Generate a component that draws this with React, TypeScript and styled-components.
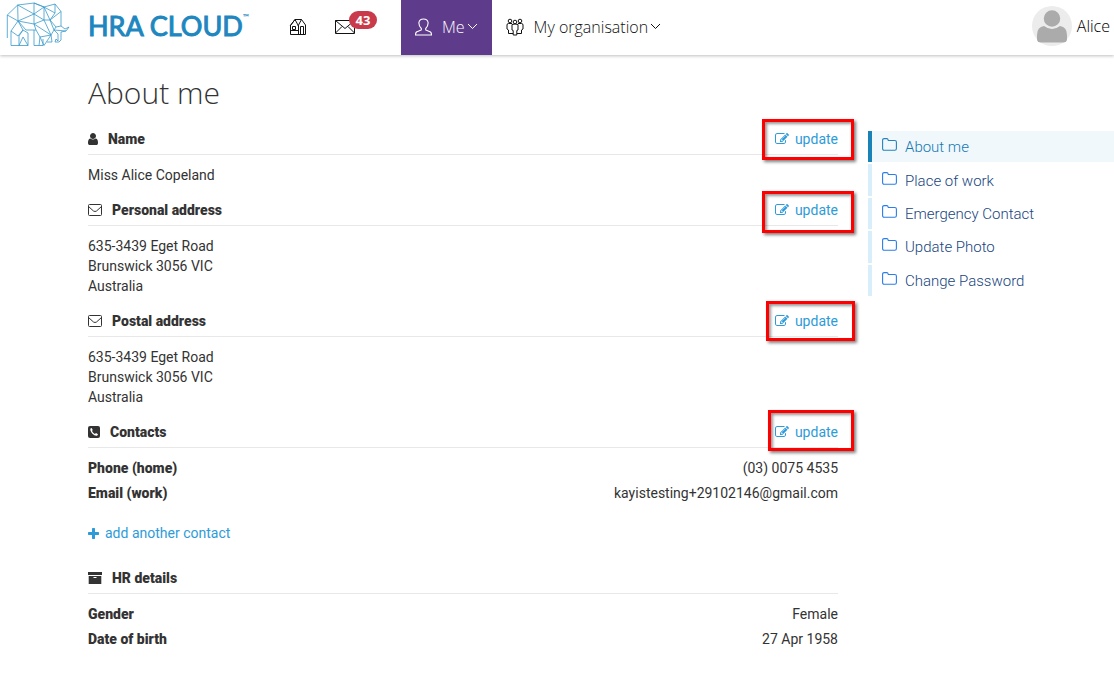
import React from "react";
import styled, { createGlobalStyle } from "styled-components";

const Global = createGlobalStyle`
  * { box-sizing: border-box; }
  body { margin: 0; background: #fff; color: #333; font: 14px/20px Roboto, sans-serif; }
  h1, h2, p, ul, dl, dd { margin: 0; padding: 0; }
  ul { list-style: none; }
  a { text-decoration: none; }
  svg { display: block; flex: none; }
`;

const Header = styled.header`
  display: flex;
  align-items: center;
  height: 55px;
  padding: 0 4px 0 6px;
  background: #fff;
  box-shadow: 0 1px 3px rgba(0, 0, 0, 0.25);
  font: 300 16px/24px "Open Sans", sans-serif;
`;

const Brand = styled.a`
  display: flex;
  align-items: center;
  gap: 18px;
  width: 283px;
  padding-bottom: 4px;
  color: #1e87c0;
`;

const Wordmark = styled.span`
  display: flex;
  font: 400 27px/32px Lato, sans-serif;
  -webkit-text-stroke: 1px currentColor;
  white-space: nowrap;
`;

const Mark = styled.sup`
  font: 700 8px/14px Lato, sans-serif;
  -webkit-text-stroke: 0;
`;

const Nav = styled.nav`
  display: flex;
  align-items: center;
  align-self: stretch;
  flex: 1;
`;

const IconLink = styled.a`
  position: relative;
  width: 46px;
  padding-bottom: 2px;
  color: #111;
`;

const Badge = styled.span`
  position: absolute;
  left: 14px;
  top: -9px;
  width: 28px;
  border-radius: 9px;
  background: #c93a4a;
  color: #fff;
  font: 700 13px/18px "Open Sans", sans-serif;
  text-align: center;
`;

const MenuButton = styled.button<{ $active?: boolean }>`
  display: flex;
  align-items: center;
  align-self: stretch;
  gap: 2px;
  margin-left: ${(p) => (p.$active ? "20px" : "0")};
  padding: 0 14px 2px;
  border: 0;
  background: ${(p) => (p.$active ? "#5e3c8b" : "transparent")};
  color: ${(p) => (p.$active ? "#fff" : "#111")};
  font: inherit;
`;

const MenuLabel = styled.span`
  margin-left: 8px;
`;

const Account = styled.a`
  display: flex;
  align-items: center;
  gap: 5px;
  padding-bottom: 4px;
  color: #000;
`;

const Layout = styled.div`
  display: grid;
  grid-template-columns: 125fr 41fr;
  column-gap: 30px;
  padding: 18px 0 24px 88px;
`;

const Title = styled.h1`
  margin-bottom: 16px;
  font: 300 30px/40px "Open Sans", sans-serif;
`;

const Section = styled.section`
  margin-bottom: 15px;
`;

const SectionHead = styled.div`
  display: flex;
  justify-content: space-between;
  margin-bottom: 10px;
  padding-bottom: 5px;
  border-bottom: 1px solid #e8e8e8;
`;

const SectionTitle = styled.h2`
  display: flex;
  align-items: center;
  gap: 10px;
  font: 900 14px/20px Roboto, sans-serif;
`;

const ActionLink = styled.a`
  position: relative;
  display: inline-flex;
  align-items: center;
  gap: 6px;
  color: #2e9bd9;
`;

const Highlight = styled.span<{ $inset: string }>`
  position: absolute;
  inset: ${(p) => p.$inset};
  border: 3px solid #fe0000;
  box-shadow: 2px 2px 3px rgba(0, 0, 0, 0.5), inset 2px 2px 3px rgba(0, 0, 0, 0.4);
`;

const Details = styled.dl`
  display: grid;
  gap: 5px;
`;

const Detail = styled.div`
  display: flex;
  justify-content: space-between;
`;

const Term = styled.dt`
  font-weight: 900;
`;

const AddRow = styled.p`
  display: flex;
  margin: 20px 0 25px;
`;

const SideList = styled.ul`
  display: grid;
  grid-auto-rows: 1fr;
  gap: 2px;
  min-height: 165px;
  margin-top: 58px;
`;

const SideLink = styled.a<{ $active?: boolean }>`
  display: flex;
  align-items: center;
  gap: 8px;
  height: 100%;
  padding: 1px 0 0 10px;
  border-left: 4px solid ${(p) => (p.$active ? "#1b82b8" : "#d8eefa")};
  background: ${(p) => (p.$active ? "#f0f8fc" : "transparent")};
  color: ${(p) => (p.$active ? "#1478b3" : "#174580")};
  font-size: 15px;
  font-weight: 300;

  svg {
    margin-bottom: 5px;
    color: ${(p) => (p.$active ? "#2583ba" : "#2b7de9")};
  }
`;

const Elephant = () => (
  <svg width="64" height="47" viewBox="0 0 64 47" fill="none" stroke="#3a9bcb" strokeWidth="0.8">
    <path d="M1.300 36V13L11.700 3L28 1L38 5L49 2L55 9.500V24L59 27L63 25L60 29L55 30V38L53 40H49L50 37L52 39V32L48 28L50 25L55 24M38 5L28 12L11.700 3L12 19L1.300 13M12 19L5 29V43.500H13V34L17 28L22 31V43.500H13L17 35L22 43.500M12 19L28 12V1M12 19L28 22L28 12L38 18L28 22L30 28H20L12 19M38 5L28 1M38 5L44 18L55 9.500M38 5L49 11L49 2M49 11L44 18L38 18L38 5M30 28L34 35L33 43.500H28V28M28 22L45 33L38 43.500L34 35L45 33L38 18M33 43.500H37V37M45 33L48 28L44 18L50 25M45 33L46 40H41M5 29L12 34L17 28L12 19M48 28L60 29" />
  </svg>
);

const House = () => (
  <svg width="18" height="18" viewBox="0 0 18 18" fill="none" stroke="currentColor">
    <path d="M1.500 16.500V7.500L6 1.500H12.500L16.500 7V16.500ZM1 8L6 1.500L9.500 8V16M9 8L12.500 1.500M11.500 16V8.500H14.500V16M3.500 8.500H6.500V11.500H3.500ZM2 12.500H9" />
  </svg>
);

const Letter = () => (
  <svg width="20" height="14" viewBox="0 0 20 14" fill="none" stroke="currentColor">
    <path d="M.5 .5H19.500V13.500H.5ZM.5 .5L10 8.500L19.500 .5M.5 13L7 6.500M19.500 13L13 6.500" />
  </svg>
);

const Person = () => (
  <svg width="17" height="18" viewBox="0 0 17 18" fill="none" stroke="currentColor" strokeWidth="1.100">
    <path d="M6.300 10.500Q3.700 8 3.900 4.500Q4.500 1 8.500 1Q12.500 1 13.100 4.500Q13.300 8 10.700 10.500V12L15.500 14Q16.500 15 16.500 17H.5Q.5 15 1.500 14L6.300 12Z" />
  </svg>
);

const People = () => (
  <svg width="18" height="18" viewBox="0 0 18 18" fill="none" stroke="currentColor" strokeWidth="1">
    <circle cx="4" cy="3" r="1.800" />
    <circle cx="9" cy="4" r="1.800" />
    <circle cx="14" cy="3" r="1.800" />
    <path d="M6 6.500Q9 5.500 12 6.500V12L10.800 12.500V17H7.200V12.500L6 12ZM6 5.500H2.500Q1 5.500 1 7V11L2.500 12V15.500H7M12 5.500H15.500Q17 5.500 17 7V11L15.500 12V15.500H11" />
  </svg>
);

const Chevron = () => (
  <svg width="11" height="7" viewBox="0 0 11 7" fill="none" stroke="currentColor">
    <path d="M1 1L5.500 5.500L10 1" />
  </svg>
);

const Avatar = () => (
  <svg width="40" height="40" viewBox="0 0 40 40">
    <circle cx="20" cy="20" r="20" fill="#ececec" />
    <path fill="#ababab" d="M12 20Q20 26 28 20Q35 21 35 29V33Q35 36.500 31 36.500H9Q5 36.500 5 33V29Q5 21 12 20Z" />
    <circle cx="20" cy="12.500" r="9" fill="#ababab" stroke="#ececec" strokeWidth="1.500" />
  </svg>
);

const UserGlyph = () => (
  <svg width="10" height="12" viewBox="256 128 1280 1536" fill="currentColor">
    <path d="M1536 1399q0 109-62.500 187t-150.500 78h-854q-88 0-150.500-78t-62.500-187q0-85 8.500-160.500t31.500-152 58.500-131 94-89 134.500-34.500q131 128 313 128t313-128q76 0 134.500 34.500t94 89 58.500 131 31.500 152 8.500 160.500zm-256-887q0 159-112.500 271.500t-271.500 112.500-271.500-112.500-112.500-271.500 112.500-271.500 271.500-112.500 271.500 112.500 112.500 271.500z" />
  </svg>
);

const EnvelopeGlyph = () => (
  <svg width="14" height="12" viewBox="0 0 14 12" fill="none" stroke="currentColor">
    <rect x=".5" y=".5" width="13" height="11" rx="1" />
    <path d="M.5 2.500L5.500 7Q7 8 8.500 7L13.500 2.500" />
  </svg>
);

const PhoneGlyph = () => (
  <svg width="12" height="12" viewBox="0 0 12 12">
    <rect width="12" height="12" rx="2" fill="currentColor" />
    <path fill="#fff" d="M3.700 2L2.500 2.600Q1.700 4.500 4.200 7.400Q7 10.300 9.300 9.500L10 8.200L8 7.100L6.900 8Q5 7 4 5L4.700 4Z" />
  </svg>
);

const ArchiveGlyph = () => (
  <svg width="14" height="12" viewBox="0 0 14 12">
    <path fill="currentColor" d="M0 0H14V3H0ZM.7 4H13.300V12H.7Z" />
    <path stroke="#fff" d="M5.500 5.500H8.500" />
  </svg>
);

const PlusGlyph = () => (
  <svg width="11" height="11" viewBox="192 128 1408 1408" fill="currentColor">
    <path d="M1600 736v192q0 40-28 68t-68 28h-416v416q0 40-28 68t-68 28h-192q-40 0-68-28t-28-68v-416h-416q-40 0-68-28t-28-68v-192q0-40 28-68t68-28h416v-416q0-40 28-68t68-28h192q40 0 68 28t28 68v416h416q40 0 68 28t28 68z" />
  </svg>
);

const EditGlyph = () => (
  <svg width="14" height="14" viewBox="0 0 1792 1792" fill="currentColor">
    <path d="M888 1184l116-116-152-152-116 116v56h96v96h56zm440-720q-16-16-33 1l-350 350q-17 17-1 33t33-1l350-350q17-17 1-33zm80 594v190q0 119-84.500 203.500t-203.500 84.500h-832q-119 0-203.500-84.500t-84.500-203.500v-832q0-119 84.500-203.500t203.500-84.500h832q63 0 117 25 15 7 18 23 3 17-9 29l-49 49q-14 14-32 8-23-6-45-6h-832q-66 0-113 47t-47 113v832q0 66 47 113t113 47h832q66 0 113-47t47-113v-126q0-13 9-22l64-64q15-15 35-7t20 29zm-96-738l288 288-672 672h-288v-288zm444 132l-92 92-288-288 92-92q28-28 68-28t68 28l152 152q28 28 28 68t-28 68z" />
  </svg>
);

const FolderGlyph = () => (
  <svg width="15" height="13" viewBox="0 0 15 13" fill="none" stroke="currentColor" strokeWidth="1.100">
    <path d="M.6 10.500V2.200Q.6 .6 2.200 .6H4.800Q6 .6 6.300 2.500H12.800Q14.400 2.500 14.400 4V10.500Q14.400 12.300 12.800 12.300H2.200Q.6 12.300 .6 10.500Z" />
  </svg>
);

type HeadProps = { icon: React.ReactNode; title: string; inset?: string };

const Head = ({ icon, title, inset }: HeadProps) => (
  <SectionHead>
    <SectionTitle>
      {icon}
      {title}
    </SectionTitle>
    {inset && (
      <ActionLink href="#update" aria-label={`update ${title}`}>
        <EditGlyph />
        update
        <Highlight $inset={inset} />
      </ActionLink>
    )}
  </SectionHead>
);

const Address = () => (
  <p>
    635-3439 Eget Road
    <br />
    Brunswick 3056 VIC
    <br />
    Australia
  </p>
);

const pages = ["About me", "Place of work", "Emergency Contact", "Update Photo", "Change Password"];

export default function App() {
  return (
    <>
      <Global />
      <Header>
        <Brand href="#home">
          <Elephant />
          <Wordmark>
            HRA CLOUD<Mark>™</Mark>
          </Wordmark>
        </Brand>
        <Nav>
          <IconLink href="#home" aria-label="Home">
            <House />
          </IconLink>
          <IconLink href="#messages" aria-label="Messages">
            <Letter />
            <Badge>43</Badge>
          </IconLink>
          <MenuButton $active>
            <Person />
            <MenuLabel>Me</MenuLabel>
            <Chevron />
          </MenuButton>
          <MenuButton>
            <People />
            <MenuLabel>My organisation</MenuLabel>
            <Chevron />
          </MenuButton>
        </Nav>
        <Account href="#account">
          <Avatar />
          Alice
        </Account>
      </Header>
      <Layout>
        <main>
          <Title>About me</Title>
          <Section>
            <Head icon={<UserGlyph />} title="Name" inset="-10px -16px -11px -13px" />
            <p>Miss Alice Copeland</p>
          </Section>
          <Section>
            <Head icon={<EnvelopeGlyph />} title="Personal address" inset="-9px -16px -13px -13px" />
            <Address />
          </Section>
          <Section>
            <Head icon={<EnvelopeGlyph />} title="Postal address" inset="-10px -17px -10px -9px" />
            <Address />
          </Section>
          <Section>
            <Head icon={<PhoneGlyph />} title="Contacts" inset="-12px -16px -9px -7px" />
            <Details>
              <Detail>
                <Term>Phone (home)</Term>
                <dd>(03) 0075 4535</dd>
              </Detail>
              <Detail>
                <Term>Email (work)</Term>
                <dd>kayistesting+29102146@gmail.com</dd>
              </Detail>
            </Details>
            <AddRow>
              <ActionLink href="#add">
                <PlusGlyph />
                add another contact
              </ActionLink>
            </AddRow>
          </Section>
          <Section>
            <Head icon={<ArchiveGlyph />} title="HR details" />
            <Details>
              <Detail>
                <Term>Gender</Term>
                <dd>Female</dd>
              </Detail>
              <Detail>
                <Term>Date of birth</Term>
                <dd>27 Apr 1958</dd>
              </Detail>
            </Details>
          </Section>
        </main>
        <nav aria-label="Profile pages">
          <SideList>
            {pages.map((page, i) => (
              <li key={page}>
                <SideLink href="#page" $active={i === 0}>
                  <FolderGlyph />
                  {page}
                </SideLink>
              </li>
            ))}
          </SideList>
        </nav>
      </Layout>
    </>
  );
}
